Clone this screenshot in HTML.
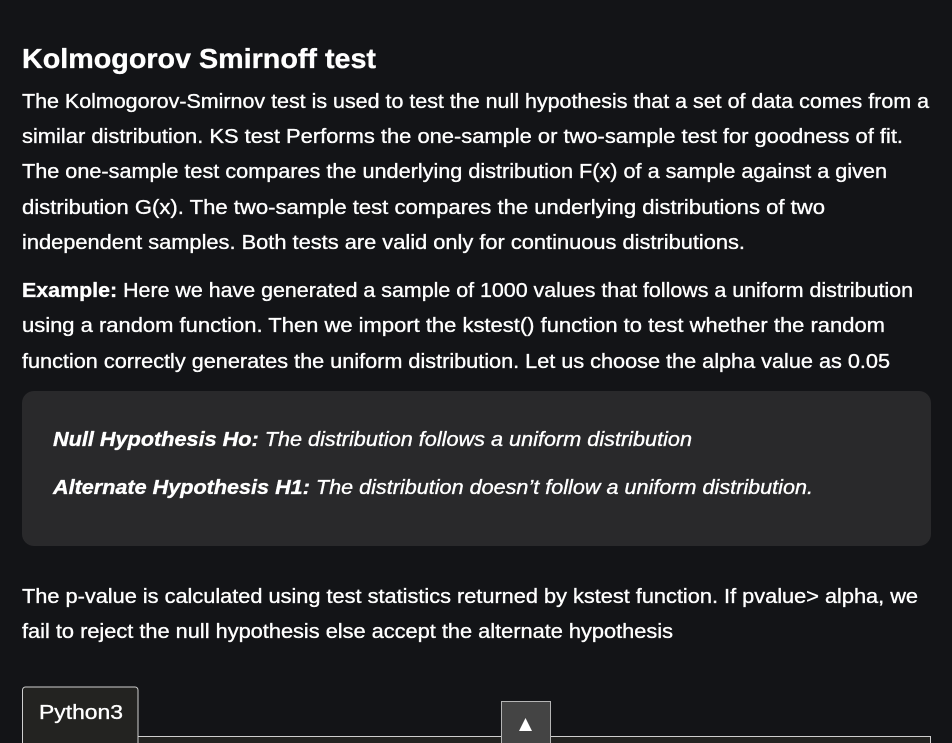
<!DOCTYPE html>
<html><head><meta charset="utf-8"><style>
html,body{margin:0;padding:0;background:#131417;width:952px;height:743px;overflow:hidden}
svg{display:block}
text{font-family:"Liberation Sans",sans-serif;fill:#ffffff;stroke:#ffffff;stroke-width:0.35px}
</style></head><body>
<svg width="952" height="743" viewBox="0 0 952 743" xmlns="http://www.w3.org/2000/svg">
<rect width="952" height="743" fill="#131417"/>
<text x="22" y="68" font-size="28" font-weight="bold" textLength="354" lengthAdjust="spacingAndGlyphs">Kolmogorov Smirnoff test</text>
<g font-size="20">
<text x="22" y="108" textLength="907" lengthAdjust="spacingAndGlyphs">The Kolmogorov-Smirnov test is used to test the null hypothesis that a set of data comes from a</text>
<text x="22" y="143" textLength="881" lengthAdjust="spacingAndGlyphs">similar distribution. KS test Performs the one-sample or two-sample test for goodness of fit.</text>
<text x="22" y="178" textLength="865" lengthAdjust="spacingAndGlyphs">The one-sample test compares the underlying distribution F(x) of a sample against a given</text>
<text x="22" y="214" textLength="803" lengthAdjust="spacingAndGlyphs">distribution G(x). The two-sample test compares the underlying distributions of two</text>
<text x="22" y="249" textLength="723" lengthAdjust="spacingAndGlyphs">independent samples. Both tests are valid only for continuous distributions.</text>
<text x="22" y="297" textLength="891" lengthAdjust="spacingAndGlyphs"><tspan font-weight="bold">Example:</tspan> Here we have generated a sample of 1000 values that follows a uniform distribution</text>
<text x="22" y="332" textLength="863" lengthAdjust="spacingAndGlyphs">using a random function.  Then we import the kstest() function to test whether the random</text>
<text x="22" y="368" textLength="868" lengthAdjust="spacingAndGlyphs">function correctly generates the uniform distribution. Let us choose the alpha value as 0.05</text>
</g>
<rect x="22" y="391" width="909" height="155" rx="12" fill="#29292b"/>
<g font-size="20" font-style="italic">
<text x="53" y="446" textLength="639" lengthAdjust="spacingAndGlyphs"><tspan font-weight="bold">Null Hypothesis Ho:</tspan> The distribution follows a uniform distribution</text>
<text x="53" y="494" textLength="760" lengthAdjust="spacingAndGlyphs"><tspan font-weight="bold">Alternate Hypothesis H1:</tspan> The distribution doesn’t follow a uniform distribution.</text>
</g>
<g font-size="20">
<text x="22" y="603" textLength="896" lengthAdjust="spacingAndGlyphs">The p-value is calculated using test statistics returned by kstest function. If pvalue&gt; alpha, we</text>
<text x="22" y="638" textLength="651" lengthAdjust="spacingAndGlyphs">fail to reject the null hypothesis else accept the alternate hypothesis</text>
</g>
<rect x="22" y="736" width="909" height="7" fill="#232321"/>
<line x1="138" y1="736.5" x2="931" y2="736.5" stroke="#cfcfcf" stroke-width="1"/>
<line x1="930.5" y1="736" x2="930.5" y2="743" stroke="#cfcfcf" stroke-width="1"/>
<path d="M22.5 743 V690 a3 3 0 0 1 3 -3 H135 a3 3 0 0 1 3 3 V743" fill="#232321" stroke="#cfcfcf" stroke-width="1"/>
<text x="39" y="719" font-size="20" textLength="84" lengthAdjust="spacingAndGlyphs">Python3</text>
<rect x="501.5" y="701.5" width="49" height="43" fill="#444444" stroke="#b5b5b5" stroke-width="1"/>
<polygon points="525.5,718 532,731 519,731" fill="#ffffff"/>
</svg>
</body></html>
